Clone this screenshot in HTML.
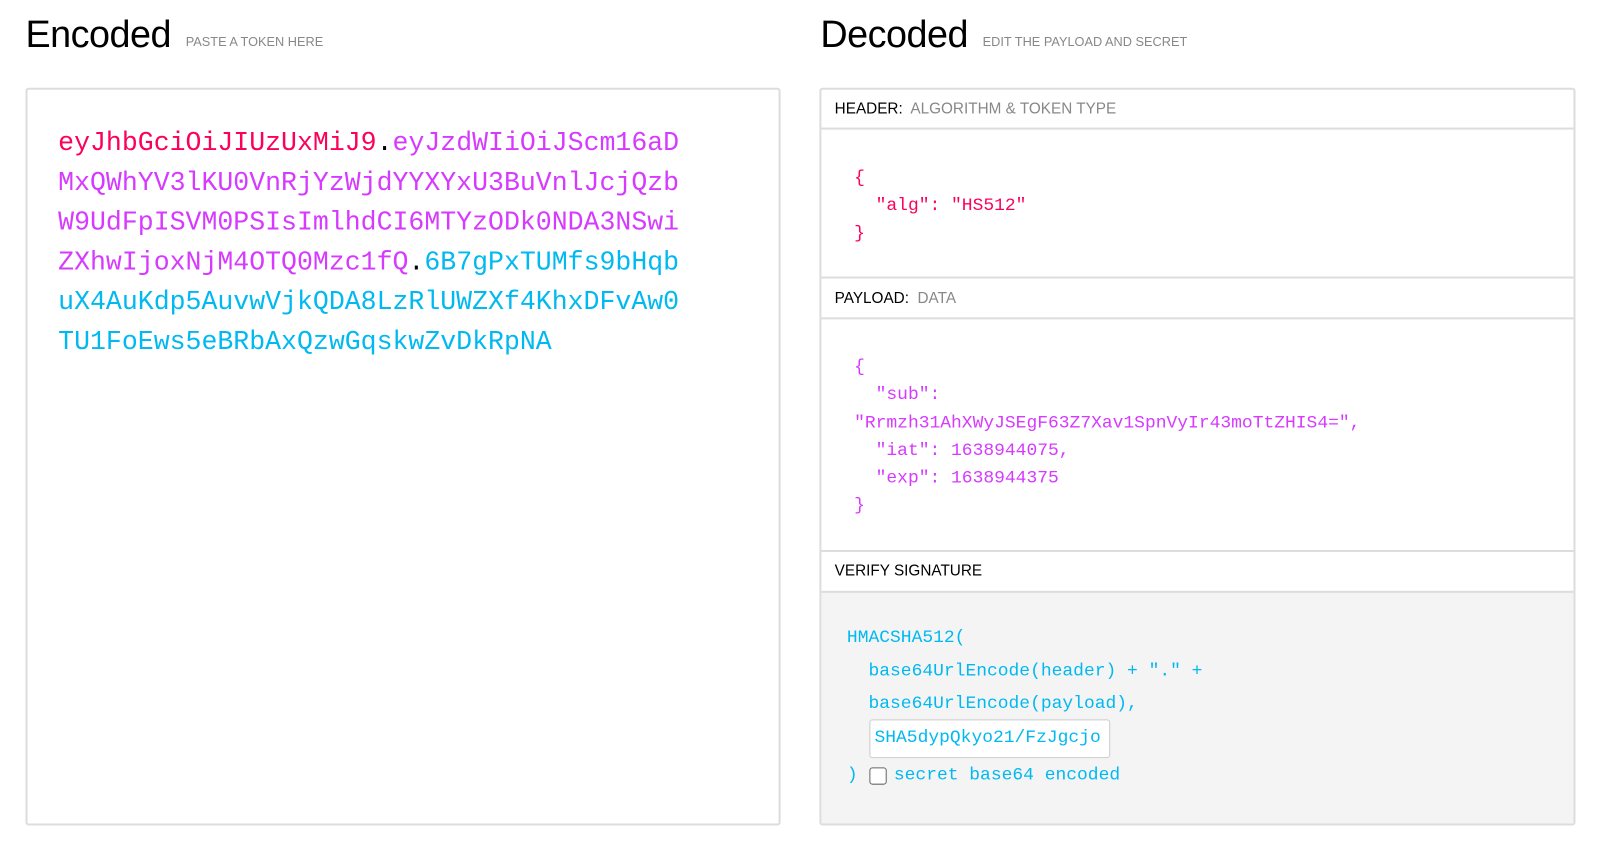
<!DOCTYPE html>
<html><head><style>
*{margin:0;padding:0;box-sizing:border-box}
body{width:1600px;height:855px;background:#fff;font-family:"Liberation Sans",sans-serif;position:relative;overflow:hidden}
#w{position:absolute;left:0;top:0;width:1568px;height:838px;transform:scale(1.0204);transform-origin:0 0}
.a{position:absolute;white-space:pre}
.h1{font-size:37px;color:#000;top:13px;letter-spacing:-0.5px}
.sub{font-size:12.5px;color:#888;top:34px}
.box{position:absolute;border:2px solid #ddd;border-radius:3px}
.mono{font-family:"Liberation Mono",monospace}
.tok{font-size:26px;left:57px}
.r{color:#fb015b}.m{color:#d63aff}.c{color:#00b9f1}.k{color:#000}
.sec{position:absolute;left:805px;width:737px;border-top:2px solid #ddd}
.ttl{font-size:15px;color:#000;left:818px}
.ttl span{color:#888}
.j{font-size:17.6px}
</style></head><body><div id="w">
<div class="a h1" style="left:25px">Encoded</div>
<div class="a sub" style="left:182px">PASTE A TOKEN HERE</div>
<div class="a h1" style="left:804px">Decoded</div>
<div class="a sub" style="left:963px">EDIT THE PAYLOAD AND SECRET</div>

<div class="box" style="left:25px;top:86px;width:740px;height:723px"></div>
<div class="a mono tok" style="top:125px"><span class="r">eyJhbGciOiJIUzUxMiJ9</span><span class="k">.</span><span class="m">eyJzdWIiOiJScm16aD</span></div>
<div class="a mono tok m" style="top:164px">MxQWhYV3lKU0VnRjYzWjdYYXYxU3BuVnlJcjQzb</div>
<div class="a mono tok m" style="top:203px">W9UdFpISVM0PSIsImlhdCI6MTYzODk0NDA3NSwi</div>
<div class="a mono tok" style="top:242px"><span class="m">ZXhwIjoxNjM4OTQ0Mzc1fQ</span><span class="k">.</span><span class="c">6B7gPxTUMfs9bHqb</span></div>
<div class="a mono tok c" style="top:281px">uX4AuKdp5AuvwVjkQDA8LzRlUWZXf4KhxDFvAw0</div>
<div class="a mono tok c" style="top:320px">TU1FoEws5eBRbAxQzwGqskwZvDkRpNA</div>

<div class="box" style="left:803px;top:86px;width:741px;height:723px"></div>
<div style="position:absolute;left:805px;top:580px;width:737px;height:227px;background:#f4f4f4"></div>
<div class="sec" style="top:125px"></div>
<div class="sec" style="top:271px"></div>
<div class="sec" style="top:311px"></div>
<div class="sec" style="top:539px"></div>
<div class="sec" style="top:579px"></div>

<div class="a ttl" style="top:98px">HEADER:&nbsp; <span>ALGORITHM &amp; TOKEN TYPE</span></div>
<div class="a mono j r" style="left:837px;top:162px;line-height:27px">{
  "alg": "HS512"
}</div>

<div class="a ttl" style="top:284px">PAYLOAD:&nbsp; <span>DATA</span></div>
<div class="a mono j m" style="left:837px;top:347px;line-height:27.3px">{
  "sub":
"Rrmzh31AhXWyJSEgF63Z7Xav1SpnVyIr43moTtZHIS4=",
  "iat": 1638944075,
  "exp": 1638944375
}</div>

<div class="a ttl" style="top:551px">VERIFY SIGNATURE</div>
<div class="a mono j c" style="left:830px;top:609px;line-height:32.5px">HMACSHA512(
  base64UrlEncode(header) + "." +
  base64UrlEncode(payload),</div>
<div style="position:absolute;left:852px;top:705px;width:236px;height:38px;background:#fff;border:1px solid #ccc;border-radius:3px"></div>
<div class="a mono j c" style="left:857px;top:713px">SHA5dypQkyo21/FzJgcjo</div>
<div class="a mono j c" style="left:830px;top:750px">)</div>
<div style="position:absolute;left:852px;top:752px;width:17px;height:17px;border:1.5px solid #666;border-radius:3px;background:#fff"></div>
<div class="a mono j c" style="left:876px;top:750px">secret base64 encoded</div>
</div></body></html>
